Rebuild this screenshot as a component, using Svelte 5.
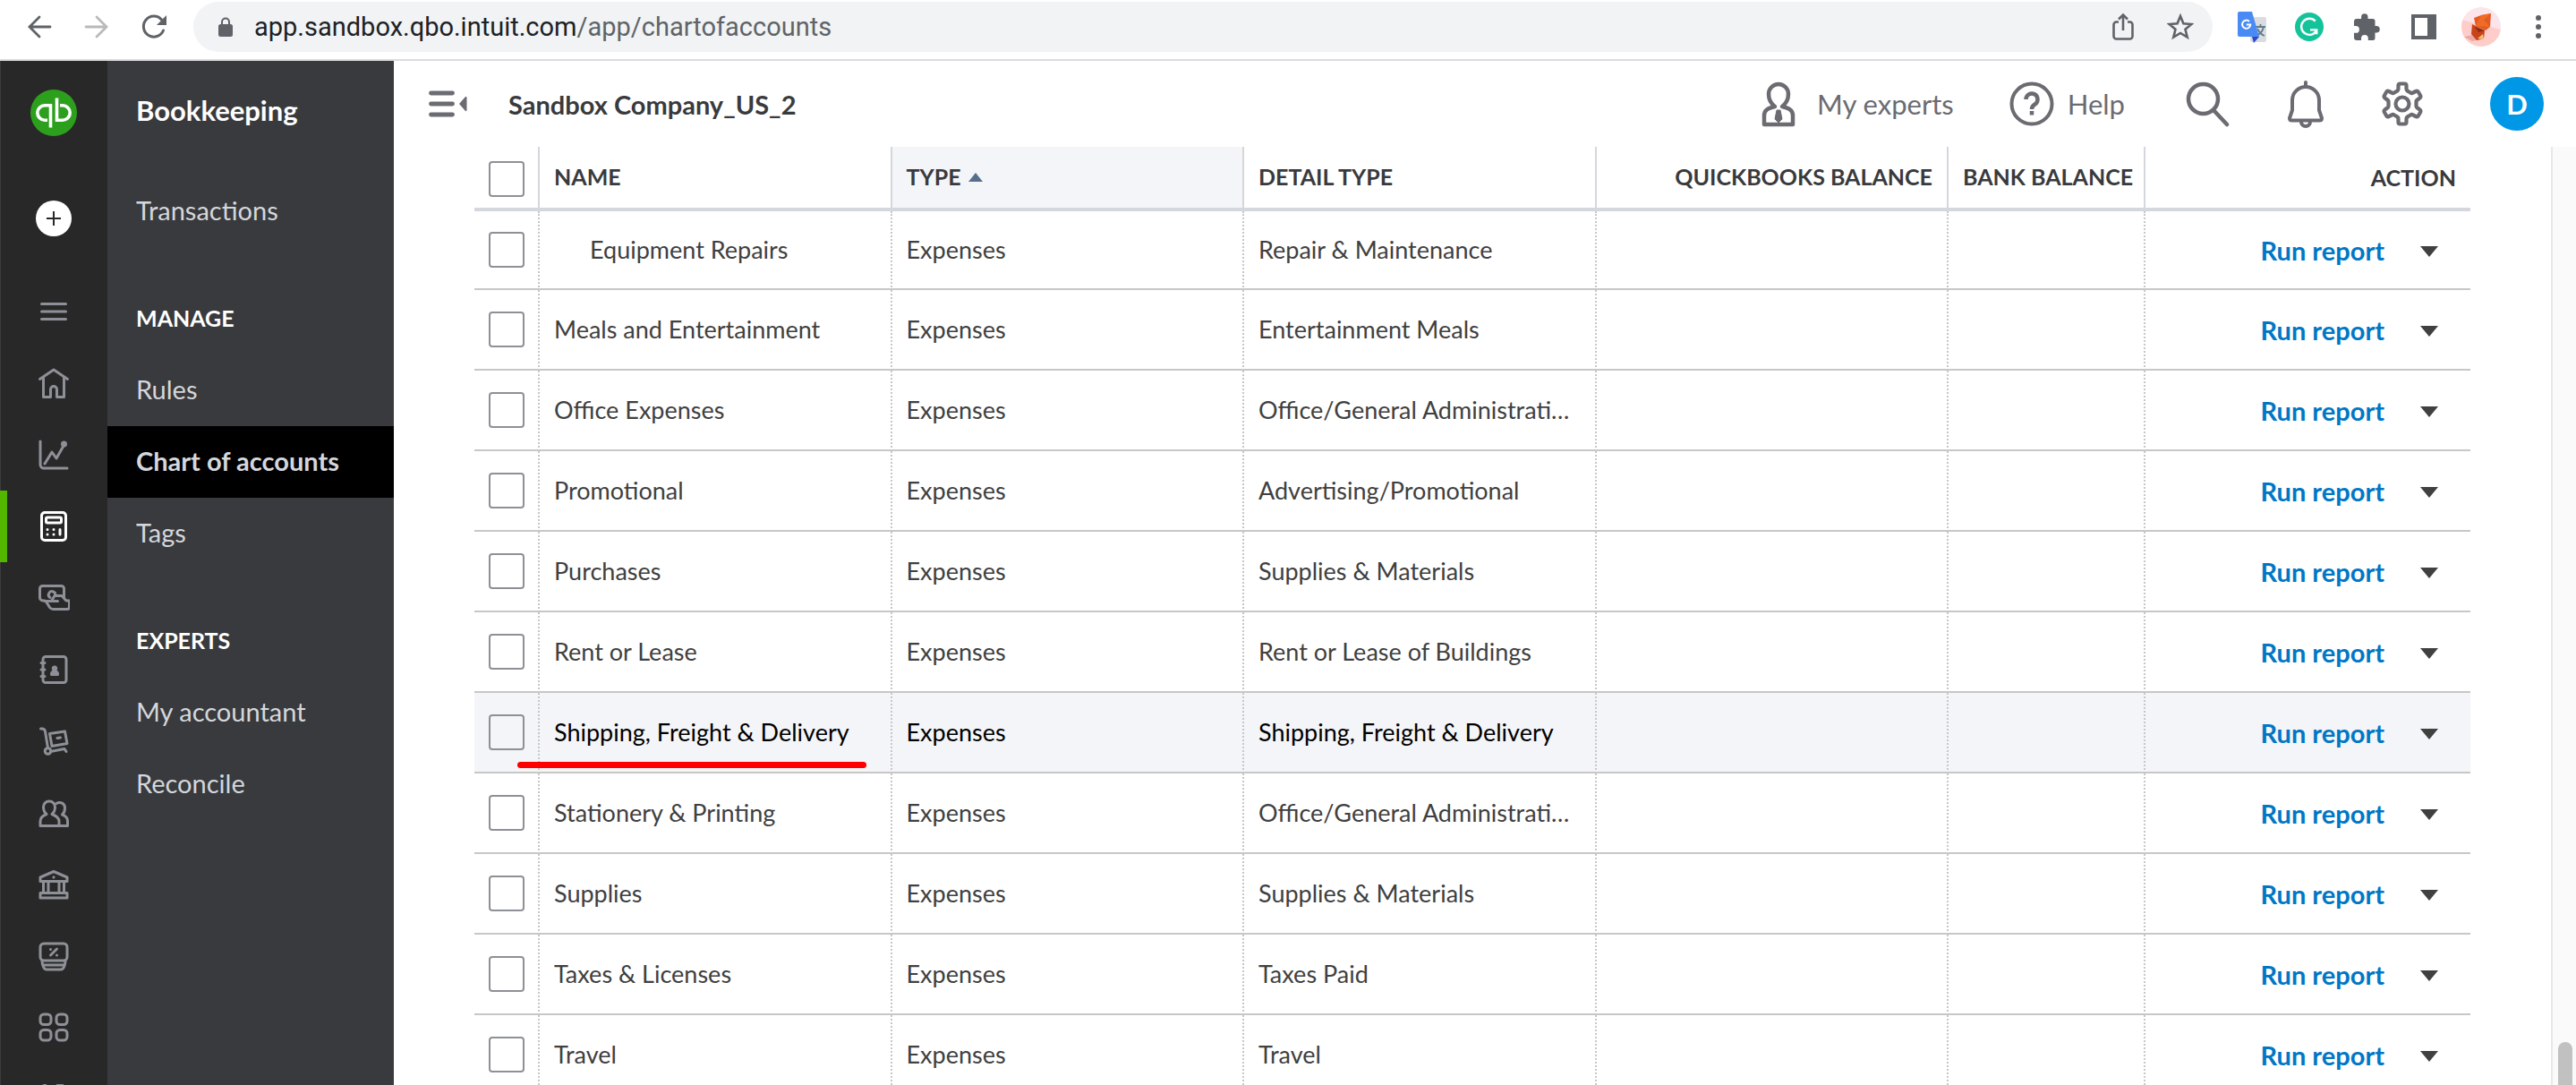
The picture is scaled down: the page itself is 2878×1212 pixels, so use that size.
<script lang="ts">
	type Account = {
		name: string;
		detail: string;
		indent?: boolean;
		active?: boolean;
	};

	type NavItem = {
		label: string;
		heading?: boolean;
		active?: boolean;
	};

	const accounts: Account[] = [
		{ name: 'Equipment Repairs', detail: 'Repair & Maintenance', indent: true },
		{ name: 'Meals and Entertainment', detail: 'Entertainment Meals' },
		{ name: 'Office Expenses', detail: 'Office/General Administrative Expenses' },
		{ name: 'Promotional', detail: 'Advertising/Promotional' },
		{ name: 'Purchases', detail: 'Supplies & Materials' },
		{ name: 'Rent or Lease', detail: 'Rent or Lease of Buildings' },
		{ name: 'Shipping, Freight & Delivery', detail: 'Shipping, Freight & Delivery', active: true },
		{ name: 'Stationery & Printing', detail: 'Office/General Administrative Expenses' },
		{ name: 'Supplies', detail: 'Supplies & Materials' },
		{ name: 'Taxes & Licenses', detail: 'Taxes Paid' },
		{ name: 'Travel', detail: 'Travel' }
	];

	const navItems: NavItem[] = [
		{ label: 'Transactions' },
		{ label: 'Manage', heading: true },
		{ label: 'Rules' },
		{ label: 'Chart of accounts', active: true },
		{ label: 'Tags' },
		{ label: 'Experts', heading: true },
		{ label: 'My accountant' },
		{ label: 'Reconcile' }
	];

	const railItems = [
		'menu',
		'home',
		'reports',
		'bookkeeping',
		'expenses',
		'contacts',
		'inventory',
		'people',
		'bank',
		'taxes',
		'apps',
		'more'
	];
</script>

<div class="window">
	<div class="browser">
		<button class="chrome-btn" aria-label="Back">
			<svg width="28" height="28" viewBox="0 0 28 28" fill="none" stroke="#5f6368" stroke-width="2.8" stroke-linecap="round">
				<path d="M26 14H3M14 3 3 14l11 11" />
			</svg>
		</button>
		<button class="chrome-btn" aria-label="Forward" disabled>
			<svg width="28" height="28" viewBox="0 0 28 28" fill="none" stroke="#bababb" stroke-width="2.8" stroke-linecap="round">
				<path d="M2 14h23M14 3l11 11-11 11" />
			</svg>
		</button>
		<button class="chrome-btn" aria-label="Reload">
			<svg width="28" height="28" viewBox="0 0 28 28" fill="none">
				<path d="M22.500 6A11.500 11.500 0 1 0 24.500 18" stroke="#5f6368" stroke-width="3" stroke-linecap="round" />
				<path d="M28 1v11H17z" fill="#5f6368" />
			</svg>
		</button>
		<div class="address">
			<svg width="16" height="22" viewBox="0 0 16 22">
				<path d="M4 9V5.500a4 4 0 0 1 8 0V9" fill="none" stroke="#5f6368" stroke-width="2" />
				<rect x="0" y="8" width="16" height="14" rx="2.500" fill="#5f6368" />
			</svg>
			<span class="url">app.sandbox.qbo.intuit.com<span>/app/chartofaccounts</span></span>
			<button class="chrome-btn" aria-label="Share">
				<svg width="24" height="32" viewBox="0 0 24 32" fill="none" stroke="#5f6368" stroke-width="2.600">
					<path d="M7 10.500H4.500a3 3 0 0 0-3 3v13a3 3 0 0 0 3 3h15a3 3 0 0 0 3-3v-13a3 3 0 0 0-3-3H17M12 20V3M7 7.500l5-5 5 5" />
				</svg>
			</button>
			<button class="chrome-btn" aria-label="Bookmark">
				<svg width="30" height="30" viewBox="0 0 30 30" fill="none" stroke="#5f6368" stroke-width="2.600">
					<path d="m15 3 3.400 8.300 9 .7-6.900 5.800 2.200 8.800L15 21.900l-7.700 4.700 2.200-8.800L2.600 12l9-.7z" />
				</svg>
			</button>
		</div>
		<button class="chrome-btn" aria-label="Translate">
			<svg width="33" height="35" viewBox="0 0 33 35">
				<rect x="14" y="6" width="18" height="28" rx="2" fill="#dadce0" />
				<path d="M20 17h11M25.500 14v3M29 17c-1 5-4 8-8 10M22 19c2 4 5 7 8 8" stroke="#607d8b" stroke-width="1.800" fill="none" />
				<path d="M16 28h8l-6 7z" fill="#3246c8" />
				<path d="M2 0h14l8 28H2a2 2 0 0 1-2-2V2a2 2 0 0 1 2-2z" fill="#4a8af4" />
				<path d="M13 11a4.600 4.600 0 1 0 1.300 3.500H9.800" fill="none" stroke="#fff" stroke-width="2" />
			</svg>
		</button>
		<button class="chrome-btn" aria-label="Grammar checker">
			<svg width="32" height="32" viewBox="0 0 33 33" fill="none">
				<circle cx="16.500" cy="16.500" r="16.500" fill="#15c39a" />
				<path d="M23.500 10A9.300 9.300 0 1 0 25 20.500M17.500 20H25v5" stroke="#fff" stroke-width="2.500" />
			</svg>
		</button>
		<button class="chrome-btn" aria-label="Extensions">
			<svg width="30" height="30" viewBox="0 0 30 30" fill="#5f6368">
				<path d="M26 14h-1.500V8.500A2.500 2.500 0 0 0 22 6h-5.500V4a3.700 3.700 0 0 0-7.400 0v2H4a3 3 0 0 0-3 3v5h2a3.900 3.900 0 0 1 0 7.800H1V27a3 3 0 0 0 3 3h5v-2a3.900 3.900 0 0 1 7.800 0v2H22a2.500 2.500 0 0 0 2.500-2.500v-6H26a3.700 3.700 0 0 0 0-7.500z" />
			</svg>
		</button>
		<button class="chrome-btn" aria-label="Side panel">
			<svg width="28" height="28" viewBox="0 0 28 28">
				<path fill-rule="evenodd" d="M0 0h28v28H0zM4 4v20h14V4z" fill="#5f6368" />
			</svg>
		</button>
		<button class="chrome-btn" aria-label="Profile">
			<svg width="44" height="44" viewBox="0 0 44 44">
				<clipPath id="profile"><circle cx="22" cy="22" r="22" /></clipPath>
				<g clip-path="url(#profile)">
					<path d="M0 0h44v44H0z" fill="#fbe4ea" />
					<path d="M0 14 44 25v19H0z" fill="#ffcdc9" />
					<path d="m3 33 10-2 8 5-9 2z" fill="#e9a9a4" />
					<path d="m12 19 14 7-1 9-8 2-6-7z" fill="#c8421a" />
					<path d="m14 12 8-3 11-2-1 15-5 4-11-5z" fill="#e65a20" />
					<path d="m22 9 11-2-8 7 7 8-16-1z" fill="#ee6c28" />
					<path d="m15 22 11 4-7 2z" fill="#8e2c12" />
					<path d="m24 30 1 6-7-1z" fill="#f2c078" />
				</g>
			</svg>
		</button>
		<button class="chrome-btn" aria-label="Browser menu">
			<svg width="6" height="28" viewBox="0 0 6 28" fill="#5f6368">
				<circle cx="3" cy="4" r="3" /><circle cx="3" cy="14" r="3" /><circle cx="3" cy="24" r="3" />
			</svg>
		</button>
	</div>

	<div class="app">
		<nav class="rail" aria-label="Main">
			<a class="logo" href="#home" aria-label="Home">
				<svg width="52" height="52" viewBox="0 0 52 52" fill="none">
					<circle cx="26" cy="26" r="26" fill="#2ca01c" />
					<path d="M22.500 42.500V17.800H16a8.200 8.200 0 0 0 0 16.400h3M29.500 9.500v24.700H36a8.200 8.200 0 0 0 0-16.400h-3" stroke="#fff" stroke-width="3.600" />
				</svg>
			</a>
			<button class="create" aria-label="Create">
				<svg width="16" height="16" viewBox="0 0 16 16" stroke="#282828" stroke-width="2"><path d="M8 0v16M0 8h16" /></svg>
			</button>
			{#each railItems as item (item)}
				<a class="rail-item" class:current={item === 'bookkeeping'} href={`#${item}`} aria-label={item}>
					<svg width="36" height="36" viewBox="0 0 36 36" fill="none" stroke="currentColor" stroke-width="3" stroke-linecap="round" stroke-linejoin="round">
						{#if item === 'menu'}
							<path d="M4.500 9.500h27M4.500 18h27M4.500 26.500h27" />
						{:else if item === 'home'}
							<path d="M2.500 13.500 18 3l15.500 10.500M6.500 12v21.500h8V25a3.500 3.500 0 0 1 7 0v8.500h8V12" />
						{:else if item === 'reports'}
							<path d="M3 3v26a4 4 0 0 0 4 4h26M8 28l8-13 5 7 8-14" />
							<circle cx="29.500" cy="6" r="2" fill="currentColor" />
						{:else if item === 'bookkeeping'}
							<rect x="4.500" y="2.500" width="27" height="31" rx="3.500" />
							<rect x="9.500" y="8" width="17" height="6" rx="1.500" />
							<path d="M11 21.500v.1M18 21.500v.1M11 27v.1M18 27v.1M25 21.500V27" />
						{:else if item === 'expenses'}
							<path d="M8 21H6a3.500 3.500 0 0 1-3.500-3.500v-10A3 3 0 0 1 5.500 4.500h21a3 3 0 0 1 3 3v10M8 21.500h14.500M9.500 22l4 6.500c1 1.500 2 2 4 2H33a2.500 2.500 0 0 0 2.500-2.500v-7H32l-5-5.500h-8l-3 5" />
							<path d="M14 17.500a3.700 3.700 0 1 1 5.500-2" />
						{:else if item === 'contacts'}
							<rect x="6" y="3.500" width="26" height="29" rx="3" />
							<path d="M4 10.500h4M4 18h4M4 25.500h4" />
							<path d="M15.500 23.500h7a3 3 0 0 0-2.500-3.500l-.5-1.500a1.800 1.800 0 1 0-1 0L18 20a3 3 0 0 0-2.500 3.500z" fill="currentColor" />
						{:else if item === 'inventory'}
							<path d="M3.500 4H5c2 0 3 1 3.500 3l3 18.500M14.500 29.500 30 26.500l2 3M13.500 9.500l17-2.500 2.500 13.500-17 3zM22 14.500l3.500-.6" />
							<circle cx="11.500" cy="29" r="3.300" />
						{:else if item === 'people'}
							<path d="M3 32.500v-5c0-4 3-6.500 7-8-3-2.500-3.500-4.500-3.500-8a6.500 6.500 0 0 1 13 0c0 3.500-.5 5.500-3.500 8 4 1.500 8 4 8 8v5zM24 32.500h9.500v-5.500c0-3.500-2-5.500-6-7 2.500-2 3-4 3-7.500 0-5-5-7.500-9.500-5" />
						{:else if item === 'bank'}
							<path d="M3 14.500V10L18 3.500 33 10v4.500zM3 33v-5.500h30V33zM6.500 15v12M12 15v12M24 15v12M29.500 15v12M18 9.800v.1" />
						{:else if item === 'taxes'}
							<rect x="3" y="4" width="30" height="19" rx="4" />
							<path d="M5 23c0 5 2 10 5 10h16c3 0 5-5 5-10M6 28h24M14.500 17l7-7M14.500 10.500v.1M21.500 17v.1" />
						{:else if item === 'apps'}
							<rect x="3" y="3" width="12" height="11.500" rx="4" />
							<rect x="21" y="3" width="12" height="11.500" rx="4" />
							<rect x="3" y="20.500" width="12" height="11.500" rx="4" />
							<rect x="21" y="20.500" width="12" height="11.500" rx="4" />
						{:else}
							<path d="M7 2.500h2M22 2.500h6M7 3v12M28 3v12" />
						{/if}
					</svg>
				</a>
			{/each}
		</nav>

		<nav class="subnav" aria-label="Bookkeeping">
			<h2>Bookkeeping</h2>
			{#each navItems as item (item.label)}
				{#if item.heading}
					<h3>{item.label}</h3>
				{:else}
					<a href={`#${item.label}`} class:selected={item.active}>{item.label}</a>
				{/if}
			{/each}
		</nav>

		<main>
			<header>
				<button aria-label="Collapse menu">
					<svg width="44" height="30" viewBox="0 0 44 30" fill="#6b6c72">
						<path d="M2.500 3h24M2.500 15h24M2.500 27h24" stroke="#6b6c72" stroke-width="4.800" stroke-linecap="round" />
						<path d="m34 15 7-8q1.500-.5 1.500 1v14q0 1.500-1.500 1z" />
					</svg>
				</button>
				<h1>Sandbox Company_US_2</h1>
				<button class="tool experts">
					<svg width="38" height="52" viewBox="0 0 38 52" fill="none" stroke="#6b6c72" stroke-width="4.500" stroke-linejoin="round">
						<path d="M15 29c-4-3-7-7-7-14a11 11 0 0 1 22 0c0 7-3 11-7 14 8 2 12 4 12 10v10H3V39c0-6 4-8 12-10z" />
						<path d="M17 33h4l2 10-4 4-4-4z" fill="#6b6c72" stroke-width="1" />
					</svg>
					My experts
				</button>
				<button class="tool help">
					<svg width="50" height="50" viewBox="0 0 50 50" fill="none" stroke="#6b6c72" stroke-width="4">
						<circle cx="25" cy="25" r="22.500" />
						<path d="M18.500 20a6.500 6.500 0 1 1 10 5.500c-2.500 1.500-3.500 2.500-3.500 5.500M25 33v4.500" stroke-width="4.500" />
					</svg>
					Help
				</button>
				<button class="tool search" aria-label="Search">
					<svg width="50" height="52" viewBox="0 0 50 52" fill="none" stroke="#6b6c72" stroke-width="4.500" stroke-linecap="round">
						<circle cx="19.500" cy="20.500" r="16.500" /><path d="m31 33 15 16" />
					</svg>
				</button>
				<button class="tool bell" aria-label="Notifications">
					<svg width="40" height="54" viewBox="0 0 40 54" fill="none" stroke="#6b6c72" stroke-width="4" stroke-linecap="round" stroke-linejoin="round">
						<path d="M20 3v4M5 34V23a15 15 0 0 1 30 0v11l3 9q0 2.500-2.500 2.500h-31Q2 45.500 2 43zM15 47a5 5 0 0 0 10 0" />
					</svg>
				</button>
				<button class="tool gear" aria-label="Settings">
					<svg width="46" height="50" viewBox="0 0 46 50" fill="none" stroke="#6b6c72" stroke-width="4.200" stroke-linejoin="round">
						<path d="M20.500 2.500h5q2 0 2 2V8q0 2 2 3l2.500 1.500q1.500 1 3 0l3-1.500q2-1 3 1l2 3.500q1 2-.5 3l-2 1.500q-2 1-2 3v4q0 2 2 3l2 1.500q1.500 1 .5 3l-2 3.500q-1 2-3 1l-3-1.500q-1.500-1-3 0L29.500 39q-2 1-2 3v3.500q0 2-2 2h-5q-2 0-2-2V42q0-2-2-3L14 37.500q-1.500-1-3 0L8 39q-2 1-3-1l-2-3.500q-1-2 .5-3l2-1.500q2-1 2-3v-4q0-2-2-3l-2-1.500q-1.500-1-.5-3L5 12q1-2 3-1l3 1.500q1.500 1 3 0l2.500-1.500q2-1 2-3V4.500q0-2 2-2z" />
						<circle cx="23" cy="25" r="7.500" />
					</svg>
				</button>
				<button class="avatar" aria-label="Account">D</button>
			</header>

			<div class="content">
				<div class="grid">
					<table>
						<colgroup>
							<col class="c-check" /><col /><col /><col /><col /><col class="c-bank" /><col class="c-action" />
						</colgroup>
						<thead>
							<tr>
								<th class="check"><input type="checkbox" aria-label="Select all" /></th>
								<th>Name</th>
								<th class="sorted" aria-sort="ascending">Type<i class="asc"></i></th>
								<th>Detail type</th>
								<th class="right">QuickBooks balance</th>
								<th class="bank">Bank balance</th>
								<th class="right last">Action</th>
							</tr>
						</thead>
						<tbody>
							{#each accounts as account (account.name)}
								<tr class:hovered={account.active}>
									<td class="check"><input type="checkbox" aria-label={`Select ${account.name}`} /></td>
									<td class:indent={account.indent}>
										{account.name}
										{#if account.active}<span class="marker"></span>{/if}
									</td>
									<td>Expenses</td>
									<td>{account.detail}</td>
									<td></td>
									<td></td>
									<td class="action">
										<div>
											<a href="#report">Run report</a>
											<button aria-label={`More actions for ${account.name}`}></button>
										</div>
									</td>
								</tr>
							{/each}
						</tbody>
					</table>
				</div>
				<div class="scrollbar"><div class="thumb"></div></div>
			</div>
		</main>
	</div>
</div>

<style>
	:global(body) {
		margin: 0;
	}

	.window {
		display: flex;
		flex-direction: column;
		height: 100vh;
		overflow: hidden;
		background: #fff;
		color: #404040;
		font-family: Lato, 'Liberation Sans', sans-serif;
		font-size: 27px;
	}

	button {
		padding: 0;
		border: 0;
		background: none;
		color: inherit;
		font: inherit;
	}

	a {
		color: inherit;
		text-decoration: none;
	}

	svg {
		display: block;
		flex: none;
	}

	.browser {
		display: flex;
		flex: none;
		align-items: center;
		height: 60px;
		padding: 0 10px 6px 12px;
		border-bottom: 2px solid #dcdcdf;
	}

	.chrome-btn {
		display: grid;
		flex: none;
		place-items: center;
		width: 64px;
	}

	.address {
		display: flex;
		flex: 1;
		align-items: center;
		height: 56px;
		margin: 0 12px;
		padding: 0 4px 0 28px;
		border-radius: 28px;
		background: #f1f3f4;
	}

	.url {
		flex: 1;
		margin-left: 24px;
		color: #202124;
		font-family: Roboto, sans-serif;
		font-size: 29px;
	}

	.url span {
		color: #5f6368;
	}

	.app {
		display: flex;
		flex: 1;
		min-height: 0;
	}

	.rail {
		box-sizing: border-box;
		display: flex;
		flex: none;
		flex-direction: column;
		align-items: center;
		width: 120px;
		padding-top: 32px;
		overflow: hidden;
		background: #282828;
		box-shadow: inset 1px 0 #3c3c3e;
		color: #8d9096;
	}

	.logo {
		margin-bottom: 72px;
	}

	.create {
		display: grid;
		flex: none;
		place-items: center;
		width: 40px;
		height: 40px;
		margin-bottom: 44px;
		border-radius: 50%;
		background: #fff;
	}

	.rail-item {
		box-sizing: border-box;
		display: grid;
		flex: none;
		place-items: center;
		width: 100%;
		height: 80px;
	}

	.rail-item.current {
		padding-right: 8px;
		border-left: 8px solid #53b700;
		color: #fff;
	}

	.subnav {
		flex: none;
		width: 320px;
		background: #393a3d;
		color: #d4d7dc;
		font-size: 29px;
		line-height: 78px;
	}

	h1,
	h2,
	h3 {
		margin: 0;
	}

	h2 {
		margin: 16px 0 32px;
		padding: 0 32px 2px;
		color: #fff;
		font-size: 31px;
	}

	h3 {
		margin-top: 40px;
		padding: 0 32px 2px;
		color: #fff;
		font-size: 25px;
		text-transform: uppercase;
	}

	.subnav a {
		display: block;
		padding: 0 32px 2px;
	}

	.subnav a.selected {
		background: #000;
		font-weight: 700;
	}

	main {
		display: flex;
		flex: 1;
		flex-direction: column;
		min-width: 0;
	}

	header {
		display: flex;
		flex: none;
		align-items: center;
		height: 96px;
		padding: 0 36px 0 39px;
	}

	h1 {
		flex: 1;
		margin-left: 45px;
		color: #393a3d;
		font-size: 29px;
	}

	.tool {
		display: flex;
		align-items: center;
		color: #6b6c72;
		font-size: 31px;
	}

	.experts {
		gap: 24px;
	}

	.help {
		gap: 15px;
		margin-left: 62px;
	}

	.search {
		margin-left: 68px;
	}

	.bell {
		margin-left: 64px;
	}

	.gear {
		margin-left: 65px;
	}

	.avatar {
		width: 60px;
		height: 60px;
		margin-left: 75px;
		border-radius: 50%;
		background: #0097e6;
		color: #fff;
		font-size: 31px;
		font-weight: 700;
	}

	.content {
		display: flex;
		flex: 1;
		min-height: 0;
		padding-left: 90px;
	}

	.grid {
		flex: 1;
		padding-right: 90px;
	}

	table {
		width: 100%;
		border-spacing: 0;
		table-layout: fixed;
	}

	.c-check {
		width: 73px;
	}

	.c-bank {
		width: 220px;
	}

	.c-action {
		width: 363px;
	}

	th,
	td {
		box-sizing: border-box;
		overflow: hidden;
		padding: 0 16px 2px;
		text-align: left;
		text-overflow: ellipsis;
		white-space: nowrap;
	}

	th {
		height: 72px;
		border-right: 2px solid #d4d7dc;
		border-bottom: 4px solid #d4d7dc;
		color: #393a3d;
		font-size: 25px;
		text-transform: uppercase;
	}

	td {
		height: 90px;
		border-right: 2px dotted #c7c7c7;
		border-bottom: 2px solid #c7c7c7;
	}

	tbody tr:first-child td {
		height: 88px;
	}

	th:last-child,
	td:last-child {
		border-right: 0;
	}

	.right {
		text-align: right;
	}

	.bank {
		padding-right: 0;
	}

	.last {
		padding-bottom: 0;
	}

	.sorted {
		background: #f4f5f8;
	}

	.asc {
		display: inline-block;
		margin: 0 0 4px 8px;
		border: 8px solid transparent;
		border-top: 0;
		border-bottom: 10px solid #55708c;
	}

	.check {
		padding: 0 0 0 16px;
	}

	th.check {
		padding-top: 4px;
	}

	.check input {
		display: block;
		box-sizing: border-box;
		width: 40px;
		height: 40px;
		margin: 0;
		border: 2px solid #8d9096;
		border-radius: 4px;
		appearance: none;
	}

	.indent {
		padding-left: 56px;
	}

	.hovered {
		position: relative;
		background: #f4f5f8;
		color: #000;
	}

	/* hand-drawn underline laid over the highlighted row */
	.marker {
		position: absolute;
		bottom: 6px;
		left: 48px;
		width: 390px;
		height: 7px;
		border-radius: 4px;
		background: #f00;
	}

	.action {
		padding-bottom: 0;
	}

	.action div {
		display: flex;
		align-items: center;
		justify-content: flex-end;
		gap: 40px;
		padding-right: 20px;
	}

	.action a {
		color: #0077c5;
		font-size: 29px;
		font-weight: 700;
	}

	.action button {
		margin-top: 4px;
		border: 10px solid transparent;
		border-top: 12px solid #404040;
		border-bottom: 0;
	}

	.scrollbar {
		box-sizing: border-box;
		display: flex;
		flex: none;
		flex-direction: column;
		justify-content: flex-end;
		width: 28px;
		padding: 0 4px 0 6px;
		border-left: 2px solid #e8e8e8;
		background: #fafafa;
	}

	.thumb {
		height: 48px;
		border-radius: 8px 8px 0 0;
		background: #c1c1c1;
	}
</style>
